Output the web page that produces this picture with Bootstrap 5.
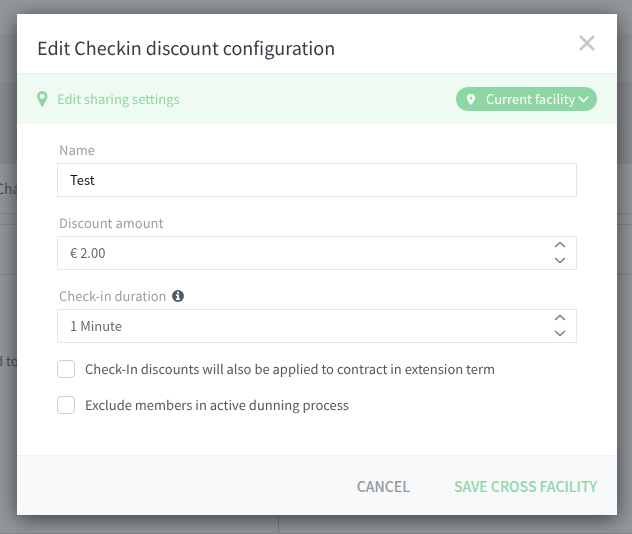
<!DOCTYPE html>
<html lang="en">
<head>
<meta charset="utf-8">
<meta name="viewport" content="width=device-width, initial-scale=1">
<title>Edit Checkin discount configuration</title>
<link rel="stylesheet" href="https://cdn.jsdelivr.net/npm/bootstrap@5.3.0/dist/css/bootstrap.min.css">
<style>
body { font-family: "Noto Sans CJK SC", "Noto Sans", sans-serif; font-size: 13px; line-height: 20px; color: #50585f; background: #94989c; overflow: hidden; text-rendering: geometricPrecision; }
.page-layer { min-height: 100vh; overflow: hidden; color: #4b5056; }
.page-layer > div { border-bottom: 1px solid #84878b; }
.page-top { height: 34px; border: 0 !important; }
.page-bar { height: 50px; background: #8f9296; }
.page-hero { height: 80px; background: #898c91; border: 0 !important; }
.page-tabs { height: 50px; font-size: 14px; }
.page-gap { height: 11px; }
.page-row { height: 50px; }
.page-cell { height: 259px; }
.page-cell > div { width: 279px; border-right: 1px solid #7c8085; padding-top: 76px; }
.page-layer .clip-text { margin-left: -5px; }
.modal-dialog { max-width: none; margin: 14px 15px 14px 17px; }
.modal-content { border: 0; border-radius: 0; color: inherit; box-shadow: 0 4px 20px rgba(0,0,0,.6); }
.modal-header { height: 59px; padding: 8px 20px 0; border: 0; border-radius: 0; }
.modal-title { font-size: 18px; line-height: 26px; font-weight: 400; color: #343c47; }
.close-x { width: 20px; height: 30px; color: #c8c8c8; }
.share-bar { height: 51px; padding: 0 20px; background: #effaf3; border-top: 1px solid #eaf4ee; color: #8fd6a5; }
.facility { min-width: 141px; height: 24px; padding: 0 8px 0 11px; border-radius: 12px; background: #8fd6a5; color: #fff; font-size: 13px; line-height: 20px; border: 0; }
.facility .pin { margin-right: 8px; }
.modal-body { padding: 16px 40px 40px; }
.modal-body .form-label { display: flex; align-items: center; gap: 5px; margin: 0 0 3px 2px; color: #9a9ea3; }
.field { margin-bottom: 16px; }
.form-control { height: 34px; padding: 0 12px 2px; border: 1px solid #dfe4e5; border-radius: 0; font-size: 13px; line-height: 20px; color: #111; }
.form-control.stepped { border-color: #e6e7e8; color: #646d75; }
.step-buttons { position: absolute; top: 0; bottom: 2px; right: 9px; width: 16px; }
.step-buttons button { height: 16px; padding: 0; border: 0; background: none; color: #7d7d7d; }
.step-buttons svg { margin: 0 auto; }
.form-check { display: flex; align-items: center; gap: 10px; min-height: 20px; padding: 0; margin: 0 0 16px; }
.form-check .form-check-input { width: 18px; height: 18px; margin: 0; border: 1px solid #cdced0; border-radius: 4px; flex: none; }
.modal-footer { height: 60px; padding: 1px 20px 0; gap: 44px; background: #f7f9fb; border-top: 1px solid #f0f2f3; border-radius: 0; }
.modal-footer > button { margin: 0; padding: 0; border: 0; font-size: 14px; line-height: 20px; font-weight: 500; color: #98999c; }
.modal-footer > .save { color: #8fd6a5; }
svg { display: block; }
</style>
<script src="https://cdn.jsdelivr.net/npm/bootstrap@5.3.0/dist/js/bootstrap.bundle.min.js"></script>
</head>
<body>
<div class="page-layer" aria-hidden="true">
  <div class="page-top"></div>
  <div class="page-bar"></div>
  <div class="page-hero"></div>
  <div class="page-tabs d-flex align-items-center"><span class="clip-text">Cha</span></div>
  <div class="page-gap"></div>
  <div class="page-row"></div>
  <div class="page-cell d-flex"><div><span class="clip-text">d to</span></div></div>
</div>

<div class="modal d-block overflow-hidden" role="dialog" aria-modal="true" aria-labelledby="dialog-title">
  <div class="modal-dialog">
    <form class="modal-content">
      <div class="modal-header d-flex justify-content-between align-items-center">
        <h1 class="modal-title" id="dialog-title">Edit Checkin discount configuration</h1>
        <button type="button" class="close-x btn p-0 border-0 d-flex justify-content-center" aria-label="Close">
          <svg width="20" height="20" viewBox="0 0 20 20" fill="none" stroke="currentColor" stroke-width="2.700"><path d="M3 3l14 14M17 3L3 17"/></svg>
        </button>
      </div>
      <div class="share-bar d-flex align-items-center justify-content-between">
        <div class="d-flex align-items-center gap-2">
          <svg width="12" height="16" viewBox="0 0 12 16"><path fill="currentColor" fill-rule="evenodd" d="M5.200 0A5.200 5.200 0 0 0 0 5.200c0 .8.100 1.500.5 2.200l3.700 7.700c.4.800 1.600.8 2 0l3.700-7.700c.4-.7.500-1.400.5-2.200A5.200 5.200 0 0 0 5.200 0zm0 2.700a2.500 2.500 0 1 1 0 5 2.500 2.500 0 0 1 0-5z"/></svg>
          <span>Edit sharing settings</span>
        </div>
        <button type="button" class="facility btn d-flex align-items-center">
          <svg class="pin" width="11" height="11" viewBox="0 0 11 11"><path fill="currentColor" fill-rule="evenodd" d="M4 0a4 4 0 0 0-4 4c0 2.600 4 7 4 7s4-4.400 4-7a4 4 0 0 0-4-4zm0 2.500a1.500 1.500 0 1 1 0 3 1.500 1.500 0 0 1 0-3z"/></svg>
          <span>Current facility</span>
          <svg class="ms-auto" width="11" height="7" viewBox="0 0 11 7" fill="none" stroke="currentColor" stroke-width="1.600" stroke-linecap="round"><path d="M1.200 1l4.300 4.500L9.800 1"/></svg>
        </button>
      </div>
      <div class="modal-body">
        <div class="field">
          <label class="form-label" for="name">Name</label>
          <input class="form-control" id="name" type="text" value="Test">
        </div>
        <div class="field">
          <label class="form-label" for="amount">Discount amount</label>
          <div class="position-relative">
            <input class="form-control stepped" id="amount" type="text" value="€ 2.00">
            <div class="step-buttons d-flex flex-column">
              <button type="button" aria-label="Increase amount"><svg width="12" height="7" viewBox="0 0 12 7" fill="none" stroke="currentColor" stroke-width="1.500"><path d="M1 6l5-4.500L11 6"/></svg></button>
              <button type="button" aria-label="Decrease amount"><svg width="12" height="7" viewBox="0 0 12 7" fill="none" stroke="currentColor" stroke-width="1.500"><path d="M1 1l5 4.500L11 1"/></svg></button>
            </div>
          </div>
        </div>
        <div class="field">
          <label class="form-label" for="duration">Check-in duration
            <svg width="12" height="12" viewBox="0 0 12 12"><circle cx="6" cy="6" r="6" fill="#535f68"/><path fill="#fff" d="M5 1.700h2v1.800H5zM4 4.600h3v3.900h1v1.400H4V8.500h1V6H4z"/></svg>
          </label>
          <div class="position-relative">
            <input class="form-control stepped" id="duration" type="text" value="1 Minute">
            <div class="step-buttons d-flex flex-column">
              <button type="button" aria-label="Increase duration"><svg width="12" height="7" viewBox="0 0 12 7" fill="none" stroke="currentColor" stroke-width="1.500"><path d="M1 6l5-4.500L11 6"/></svg></button>
              <button type="button" aria-label="Decrease duration"><svg width="12" height="7" viewBox="0 0 12 7" fill="none" stroke="currentColor" stroke-width="1.500"><path d="M1 1l5 4.500L11 1"/></svg></button>
            </div>
          </div>
        </div>
        <div class="form-check">
          <input class="form-check-input" type="checkbox" id="extension">
          <label class="form-check-label" for="extension">Check-In discounts will also be applied to contract in extension term</label>
        </div>
        <div class="form-check mb-0">
          <input class="form-check-input" type="checkbox" id="dunning">
          <label class="form-check-label" for="dunning">Exclude members in active dunning process</label>
        </div>
      </div>
      <div class="modal-footer">
        <button type="button" class="btn">CANCEL</button>
        <button type="submit" class="btn save">SAVE CROSS FACILITY</button>
      </div>
    </form>
  </div>
</div>
</body>
</html>
